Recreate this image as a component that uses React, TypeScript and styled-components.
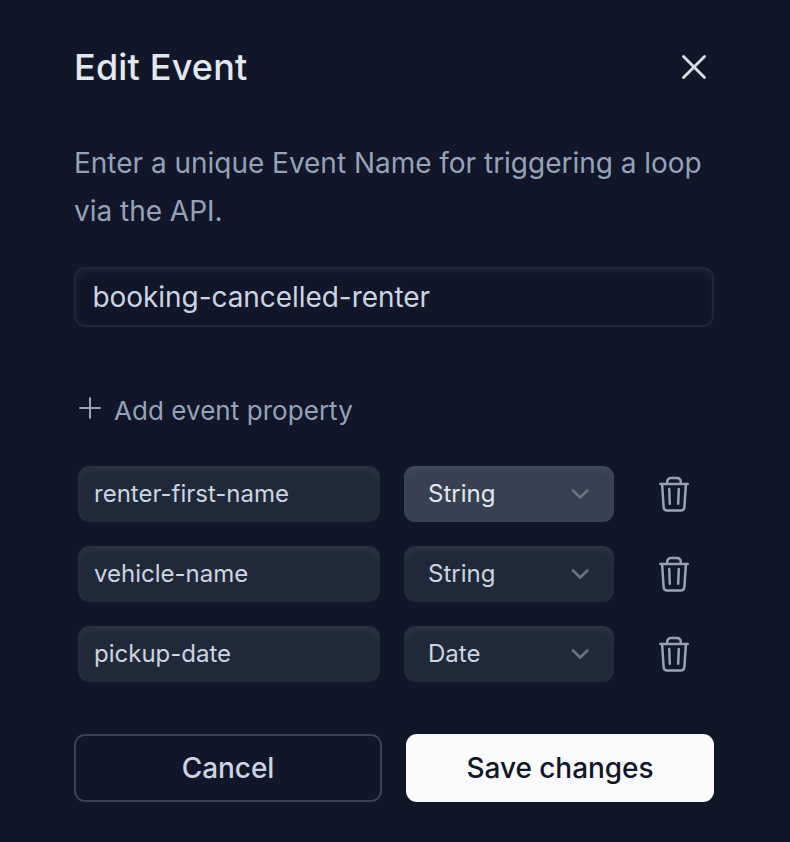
import React from "react";
import styled, { createGlobalStyle } from "styled-components";

const Global = createGlobalStyle`
  * { box-sizing: border-box; }
  body { margin: 0; background: #111628; font-family: Inter, sans-serif; -webkit-font-smoothing: antialiased; }
  button, input { font-family: inherit; }
  svg { display: block; flex: none; fill: none; stroke: currentColor; stroke-linecap: round; stroke-linejoin: round; }
`;
const Dialog = styled.main`
  width: 790px; height: 842px; padding: 42px 76px 40px 74px;
  display: flex; flex-direction: column; background: #111628;
`;
const Header = styled.header`
  display: flex; align-items: center; justify-content: space-between; height: 50px;
`;
const Title = styled.h1`
  margin: 0; font-size: 36px; font-weight: 500; line-height: 50px; letter-spacing: 0.18px; color: #e2e8f0;
`;
const IconButton = styled.button`
  display: flex; padding: 0; border: 0; background: none; color: #94a3b8;
`;
const CloseButton = styled(IconButton)`
  margin-right: 6px; color: #d9dde4;
`;
const Description = styled.p`
  margin: 47px 0 0; font-size: 28px; line-height: 48px; letter-spacing: -0.02px; color: #94a3b8; white-space: nowrap;
`;
const NameInput = styled.input`
  margin-top: 32px; width: 640px; height: 60px; padding: 0 16.5px; border: 2px solid #1f2838; border-radius: 11px;
  background: #111628; color: #cbd5e1; font-size: 28px; letter-spacing: -0.06px; outline: 0;
  box-shadow: inset 0 4px 8px rgba(148, 155, 190, 0.08);
`;
const AddButton = styled.button`
  margin-top: 63px; height: 40px; display: flex; align-items: center; gap: 13px; padding: 0 0 0 5px;
  border: 0; background: none; color: #94a3b8; font-size: 26px; letter-spacing: 0.05px;

  svg { margin-bottom: 5px; }
`;
const Rows = styled.div`
  margin: 36px 0 0 4px; display: grid; gap: 24px;
`;
const Row = styled.div`
  display: grid; grid-template-columns: 302px 210px 32px; column-gap: 24px; align-items: center; height: 56px;

  ${IconButton} { margin-left: 20px; }
`;
const Field = styled.input`
  width: 302px; height: 56px; padding: 0 16px 2px; border: 0; border-radius: 11px; outline: 0;
  background: #202938; color: #cbd5e1; font-size: 24px;
  box-shadow: inset 0 4px 8px rgba(255, 255, 255, 0.05);
`;
const Select = styled.button<{ $active?: boolean }>`
  height: 56px; padding: 0 24px 2px; border: 0; border-radius: 11px;
  display: flex; align-items: center; justify-content: space-between;
  background: ${(p) => (p.$active ? "#374151" : "#202938")};
  color: ${(p) => (p.$active ? "#e2e8f0" : "#cbd5e1")};
  font-size: 24px;
  box-shadow: inset 0 4px 8px rgba(255, 255, 255, 0.05);

  svg { color: #6b7280; margin-top: 2px; }
`;
const Actions = styled.footer`
  margin-top: 52px; display: grid; grid-template-columns: 308px 308px; gap: 24px;
`;
const Action = styled.button<{ $primary?: boolean }>`
  height: 68px; border-radius: 11px; padding: 0; font-size: 28px; font-weight: 500; letter-spacing: -0.05px;
  border: ${(p) => (p.$primary ? "0" : "2px solid #374151")};
  background: ${(p) => (p.$primary ? "#f9fafc" : "transparent")};
  color: ${(p) => (p.$primary ? "#111628" : "#cbd5e1")};
`;

const CloseIcon = () => (
  <svg width="28" height="28" viewBox="0 0 28 28" strokeWidth="2.9">
    <path d="M3.5 3.5 24.5 24.5M24.5 3.5 3.5 24.5" />
  </svg>
);
const PlusIcon = () => (
  <svg width="22" height="22" viewBox="0 0 22 22" strokeWidth="2">
    <path d="M11 1v20M1 11h20" />
  </svg>
);
const ChevronIcon = () => (
  <svg width="20" height="20" viewBox="0 0 20 20" strokeWidth="2.7">
    <path d="M3 6.5 10.2 13.5 17.4 6.5" />
  </svg>
);
const TrashIcon = () => (
  <svg width="32" height="38" viewBox="0 0 32 38" strokeWidth="2.5">
    <path d="M2.3 9h27.4" />
    <path d="M9.2 8.8V7.4Q9.2 2.9 13.2 2.9h5.6Q22.8 2.9 22.8 7.4v1.4" />
    <path d="M4.1 9 5.6 32Q5.8 35.5 9.2 35.5h13.6q3.4 0 3.6-3.5L27.9 9" />
    <path d="M11.2 14 11.8 28.8M20.8 14 20.2 28.8" />
  </svg>
);

const properties = [
  { name: "renter-first-name", type: "String", active: true },
  { name: "vehicle-name", type: "String" },
  { name: "pickup-date", type: "Date" },
];

export default function App() {
  return (
    <>
      <Global />
      <Dialog>
        <Header>
          <Title>Edit Event</Title>
          <CloseButton aria-label="Close"><CloseIcon /></CloseButton>
        </Header>
        <Description>Enter a unique Event Name for triggering a loop<br />via the API.</Description>
        <NameInput defaultValue="booking-cancelled-renter" />
        <AddButton><PlusIcon /><span>Add event property</span></AddButton>
        <Rows>
          {properties.map((p) => (
            <Row key={p.name}>
              <Field defaultValue={p.name} />
              <Select $active={p.active}>{p.type}<ChevronIcon /></Select>
              <IconButton aria-label="Delete property"><TrashIcon /></IconButton>
            </Row>
          ))}
        </Rows>
        <Actions>
          <Action>Cancel</Action>
          <Action $primary>Save changes</Action>
        </Actions>
      </Dialog>
    </>
  );
}
